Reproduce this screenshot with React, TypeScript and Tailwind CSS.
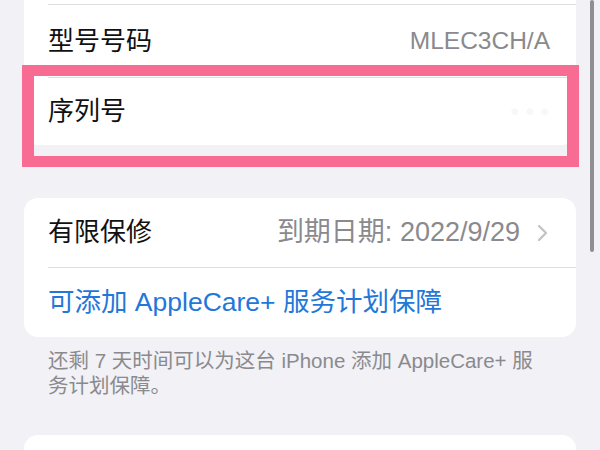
export default function App() {
  const font = { fontFamily: '"Liberation Sans", "Noto Sans CJK SC", sans-serif' };
  return (
    <div
      className="relative w-[600px] h-[450px] overflow-hidden bg-[#f1f1f6]"
      style={font}
    >
      {/* Device info card */}
      <div className="mx-[24px] bg-white rounded-b-[14px]">
        <div className="h-[4px]" />
        <div className="ml-[24px] h-px bg-[#dedee2]" />
        <div className="flex items-center justify-between h-[72px] pl-[24px] pr-[26px]">
          <span className="text-[26px] text-[#111]">型号号码</span>
          <span className="text-[24.5px] text-[#8a8a8e]">MLEC3CH/A</span>
        </div>
        <div className="ml-[24px] h-px bg-[#dedee2]" />
        <div className="flex items-center justify-between h-[67px] pl-[24px] pr-[27px]">
          <span className="text-[26px] text-[#111]">序列号</span>
          <span className="text-[24px] text-[#f7f7f9]">• • •</span>
        </div>
      </div>

      {/* Warranty card */}
      <div className="mx-[24px] mt-[53px] bg-white rounded-[14px]">
        <div className="flex items-center justify-between h-[69px] pl-[24px] pr-[28px]">
          <span className="text-[26px] text-[#111]">有限保修</span>
          <div className="flex items-center gap-[17px]">
            <span className="text-[27px] text-[#8a8a8e]">到期日期: 2022/9/29</span>
            <svg width="11" height="18" viewBox="0 0 11 18" fill="none">
              <path
                d="M2 2l7 7-7 7"
                stroke="#c4c4c8"
                strokeWidth="2.4"
                strokeLinecap="round"
                strokeLinejoin="round"
              />
            </svg>
          </div>
        </div>
        <div className="ml-[24px] h-px bg-[#dedee2]" />
        <div className="flex items-center h-[69px] pl-[24px]">
          <span className="text-[26.5px] text-[#2377d9]">可添加 AppleCare+ 服务计划保障</span>
        </div>
      </div>

      {/* Footer note */}
      <p className="pl-[48px] pr-[30px] pt-[11px] text-[20.5px] leading-[25px] text-[#8a8a8e] whitespace-nowrap">
        还剩 7 天时间可以为这台 iPhone 添加 AppleCare+ 服
        <br />
        务计划保障。
      </p>

      {/* Next card */}
      <div className="mx-[24px] mt-[37px] h-[60px] bg-white rounded-t-[14px]" />

      {/* Highlight overlay */}
      <div className="absolute left-[22px] top-[65px] w-[557px] h-[102px] border-x-[12px] border-y-[11px] border-[#f86b93]" />

      {/* Scroll indicator */}
      <div className="absolute left-[590px] top-0 w-[4px] h-[252px] rounded-full bg-[#8e8e93]" />
    </div>
  );
}
